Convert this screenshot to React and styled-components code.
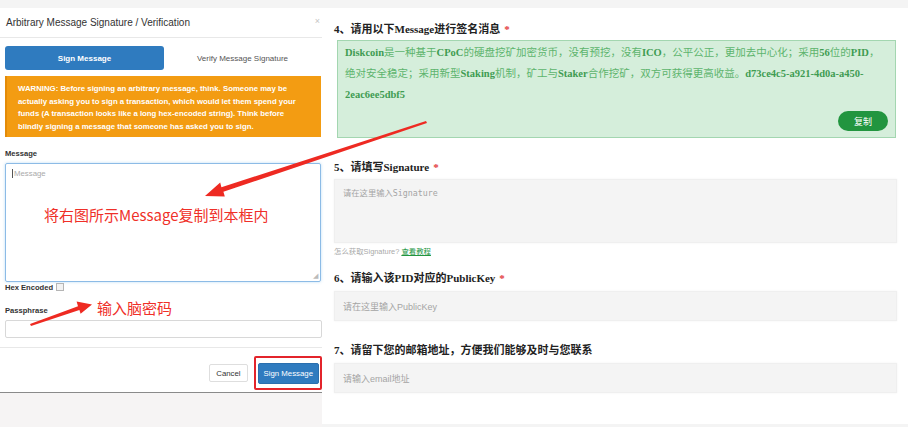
import React from 'react';
import styled, { createGlobalStyle } from 'styled-components';

const GlobalStyle = createGlobalStyle`
  body {
    margin: 0;
    font-family: "Liberation Sans", Arial, sans-serif;
  }
`

const Page = styled.div`
  position: relative;
  width: 908px;
  height: 427px;
  box-sizing: border-box;
  padding-top: 8px;
  background: #f4f4f4;
  display: flex;
  align-items: flex-start;
  overflow: hidden;
`

// ---------- left: modal ----------
const LeftPanel = styled.div`
  width: 322px;
  height: 419px;
  display: flex;
  flex-direction: column;
  background: #f6f4f4;
`

const Modal = styled.div`
  height: 384px;
  background: #fff;
  border-bottom: 1px solid #8a8a8a;
  display: flex;
  flex-direction: column;
`

const ModalHeader = styled.div`
  height: 29px;
  padding: 0 2px 0 6px;
  border-bottom: 1px solid #e8e8e8;
  display: flex;
  align-items: center;
  justify-content: space-between;
`

const Title = styled.div`
  font-size: 10px;
  color: #333;
`

const Close = styled.span`
  font-size: 9px;
  color: #c4c4c4;
  margin-top: -3px;
`

const ModalBody = styled.div`
  padding-left: 5px;
  display: flex;
  flex-direction: column;
`

const Tabs = styled.div`
  margin-top: 8px;
  display: flex;
  width: 316px;
`

const Tab = styled.div`
  height: 24px;
  width: ${p => p.$w}px;
  border-radius: 3px;
  display: flex;
  align-items: center;
  justify-content: center;
  font-size: 8px;
  font-weight: ${p => (p.$active ? 'bold' : 'normal')};
  color: ${p => (p.$active ? '#fff' : '#555')};
  background: ${p => (p.$active ? '#2f7bbf' : 'transparent')};
`

const Warning = styled.div`
  margin-top: 6px;
  width: 316px;
  height: 61px;
  box-sizing: border-box;
  padding: 7px 0 0 11px;
  background: #f39c12;
  border-left: 2px solid #e38b08;
  color: #fff;
  font-size: 7.8px;
  font-weight: bold;
  line-height: 12.7px;
  white-space: nowrap;
`

const Label = styled.div`
  position: relative;
  margin-top: ${p => p.$mt}px;
  font-size: 7.6px;
  font-weight: bold;
  color: #333;
  line-height: 10px;
  display: flex;
  align-items: center;
  gap: 3px;
`

const Check = styled.span`
  width: 6px;
  height: 6px;
  border: 1px solid #b5b5b5;
  background: #f2f2f2;
  margin-top: -3px;
`

const AreaWrap = styled.div`
  position: relative;
  margin-top: 4px;
  width: 316px;
  height: 119px;
  box-sizing: border-box;
  border: 1px solid #8cbbe6;
  border-radius: 2px;
  box-shadow: 0 0 3px rgba(102, 175, 233, 0.45);
  padding: 5px 6px;
  font-size: 7.8px;
  color: #aaa;
`

const Caret = styled.span`
  border-left: 1px solid #555;
  margin-right: 1px;
`

const Grip = styled.span`
  position: absolute;
  right: 2px;
  bottom: 1px;
  font-size: 7px;
  color: #bbb;
`

const Note = styled.div`
  position: absolute;
  left: ${p => p.$x}px;
  top: ${p => p.$y}px;
  font-family: "Noto Sans CJK SC", sans-serif;
  font-size: 15px;
  font-weight: normal;
  line-height: 18px;
  color: #ef2f28;
  white-space: nowrap;
`

const TextInput = styled.div`
  margin-top: 4px;
  width: 317px;
  height: 18px;
  box-sizing: border-box;
  border: 1px solid #d8d8d8;
  border-radius: 2px;
`

const ModalFooter = styled.div`
  margin-top: 9px;
  border-top: 1px solid #e8e8e8;
  padding-top: 8px;
  display: flex;
  justify-content: flex-end;
  align-items: center;
  gap: 6px;
`

const Button = styled.div`
  height: ${p => (p.$primary ? 21 : 18)}px;
  padding: 0 ${p => (p.$primary ? 5 : 6)}px;
  box-sizing: border-box;
  display: flex;
  align-items: center;
  font-size: 7.8px;
  border-radius: 2px;
  color: ${p => (p.$primary ? '#fff' : '#333')};
  background: ${p => (p.$primary ? '#2f7bbf' : '#fff')};
  border: 1px solid ${p => (p.$primary ? '#2a6fae' : '#dedede')};
`

const Highlight = styled.div`
  border: 2px solid #e3242b;
  border-radius: 2px;
  padding: 5px 1px 4px 2px;
`

// ---------- right: form ----------
const RightPanel = styled.div`
  flex: 1;
  height: 416px;
  box-sizing: border-box;
  padding: 13px 11px 0 12px;
  background: #fff;
`

const Heading = styled.div`
  margin-top: ${p => p.$mt || 0}px;
  font-family: "Liberation Serif", "Noto Sans CJK SC", serif;
  font-size: 11px;
  font-weight: bold;
  line-height: 16px;
  color: #222;
`

const Star = styled.span`
  color: #e2373a;
  margin-left: 4px;
`

const MessageBox = styled.div`
  margin: 3px 1px 0 3px;
  height: 98px;
  box-sizing: border-box;
  padding: 1px 7px 6px 7px;
  background: #d5eedb;
  border: 1px solid #a3d6b0;
  display: flex;
  flex-direction: column;
`

const MessageText = styled.div`
  font-family: "Liberation Serif", "Noto Sans CJK SC", serif;
  font-size: 10.5px;
  line-height: 21px;
  color: #5db46d;
  white-space: nowrap;

  b {
    color: #3f9c52;
  }
`

const CopyButton = styled.div`
  align-self: flex-end;
  margin-top: auto;
  width: 50px;
  height: 20px;
  border-radius: 10px;
  background: #22953f;
  color: #fff;
  font-family: "Noto Sans CJK SC", sans-serif;
  font-size: 9px;
  display: flex;
  align-items: center;
  justify-content: center;
`

const Field = styled.div`
  margin-top: ${p => p.$mt}px;
  height: ${p => p.$h}px;
  box-sizing: border-box;
  background: #f4f4f4;
  border: 1px solid #efefef;
  box-shadow: 0 0 2px rgba(0, 0, 0, 0.06);
  display: flex;
  align-items: ${p => (p.$multi ? 'flex-start' : 'center')};
  padding: ${p => (p.$multi ? '6px 8px' : '0 8px')};
  font-family: ${p => (p.$mono ? '"DejaVu Sans Mono", "Noto Sans CJK SC", monospace' : '"Liberation Sans", "Noto Sans CJK SC", sans-serif')};
  font-size: ${p => (p.$mono ? 8.3 : 9)}px;
  color: #a4a4a4;
`

const Help = styled.div`
  margin-top: 4px;
  font-family: "Liberation Sans", "Noto Sans CJK SC", sans-serif;
  font-size: 7.4px;
  line-height: 10px;
  color: #a9a9a9;

  a {
    color: #22953f;
    text-decoration: underline;
  }
`

const BottomStrip = styled.div`
  height: 3px;
`

const Arrows = styled.svg`
  position: absolute;
  left: 0;
  top: 0;
  pointer-events: none;
`

export default function App() {
  return (
    <>
      <GlobalStyle />
      <Page>
        <LeftPanel>
          <Modal>
            <ModalHeader>
              <Title>Arbitrary Message Signature / Verification</Title>
              <Close>×</Close>
            </ModalHeader>
            <ModalBody>
              <Tabs>
                <Tab $active $w={159}>Sign Message</Tab>
                <Tab $w={157}>Verify Message Signature</Tab>
              </Tabs>
              <Warning>
                WARNING: Before signing an arbitrary message, think. Someone may be<br />
                actually asking you to sign a transaction, which would let them spend your<br />
                funds (A transaction looks like a long hex-encoded string). Think before<br />
                blindly signing a message that someone has asked you to sign.
              </Warning>
              <Label $mt={12}>Message</Label>
              <AreaWrap>
                <Caret />Message
                <Note $x={38} $y={42}>将右图所示Message复制到本框内</Note>
                <Grip>◢</Grip>
              </AreaWrap>
              <Label $mt={1}>Hex Encoded <Check /></Label>
              <Label $mt={13}>
                Passphrase
                <Note $x={92} $y={-7}>输入脑密码</Note>
              </Label>
              <TextInput />
            </ModalBody>
            <ModalFooter>
              <Button>Cancel</Button>
              <Highlight>
                <Button $primary>Sign Message</Button>
              </Highlight>
            </ModalFooter>
          </Modal>
        </LeftPanel>

        <RightPanel>
          <Heading>4、请用以下Message进行签名消息<Star>*</Star></Heading>
          <MessageBox>
            <MessageText>
              <b>Diskcoin</b>是一种基于<b>CPoC</b>的硬盘挖矿加密货币，没有预挖，没有<b>ICO</b>，公平公正，更加去中心化；采用<b>56</b>位的<b>PID</b>，<br />
              绝对安全稳定；采用新型<b>Staking</b>机制，矿工与<b>Staker</b>合作挖矿，双方可获得更高收益。<b>d73ce4c5-a921-4d0a-a450-</b><br />
              <b>2eac6ee5dbf5</b>
            </MessageText>
            <CopyButton>复制</CopyButton>
          </MessageBox>

          <Heading $mt={21}>5、请填写Signature<Star>*</Star></Heading>
          <Field $mt={4} $h={64} $multi $mono>请在这里输入Signature</Field>
          <Help>怎么获取Signature? <a>查看教程</a></Help>

          <Heading $mt={13}>6、请输入该PID对应的PublicKey<Star>*</Star></Heading>
          <Field $mt={5} $h={30}>请在这里输入PublicKey</Field>

          <Heading $mt={21}>7、请留下您的邮箱地址，方便我们能够及时与您联系</Heading>
          <Field $mt={5} $h={30}>请输入email地址</Field>
        </RightPanel>

        <Arrows width="908" height="427" viewBox="0 0 908 427">
          <polygon
            fill="#ee2a22"
            points="427,123 223.4,191.8 224.8,196.4 205,196 220.2,182.6 221.4,187.2 426,121"
          />
          <polygon
            fill="#ee2a22"
            points="30,324 78,306.2 76.6,301.6 92,304.5 80.6,313.8 79.4,310 31,326"
          />
        </Arrows>
        <BottomStrip />
      </Page>
    </>
  );
}
